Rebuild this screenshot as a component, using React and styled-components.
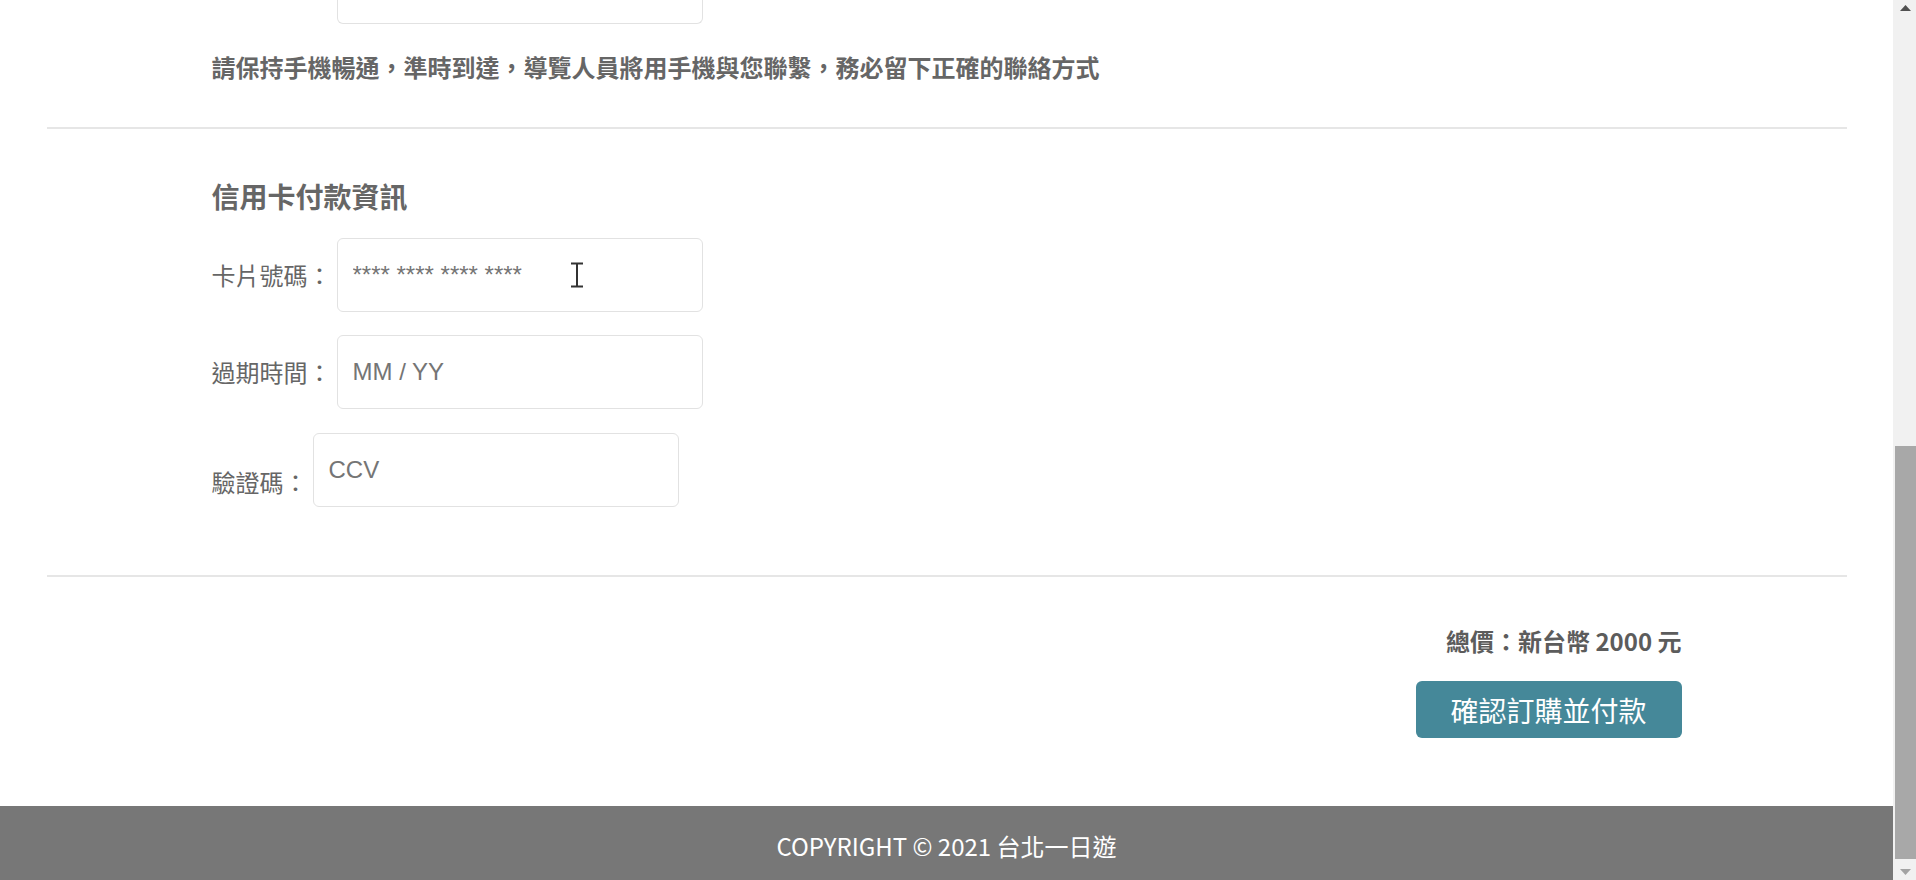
import React from "react";
import styled, { createGlobalStyle } from "styled-components";

const Global = createGlobalStyle`
  html, body { margin: 0; padding: 0; overflow: hidden; background: #fff; }
  body { font-family: "Noto Sans CJK TC", "Noto Sans", sans-serif; }
  * { box-sizing: border-box; }
`;

const Viewport = styled.div`
  display: flex;
  width: 1916px;
  height: 880px;
  overflow: hidden;
`;

const Page = styled.div`
  flex: 1;
  display: flex;
  flex-direction: column;
  min-width: 0;
`;

const Container = styled.div`
  width: 1470px;
  margin: 0 auto;
  display: flex;
  flex-direction: column;
  align-items: ${(p) => (p.$end ? "flex-end" : "flex-start")};
`;

const StubInput = styled.div`
  margin-left: 125px;
  width: 366px;
  height: 24px;
  border: 1px solid #e2e2e2;
  border-top: none;
  border-radius: 0 0 6px 6px;
`;

const Notice = styled.p`
  margin: 25px 0 0;
  font-size: 24px;
  line-height: 36px;
  font-weight: 700;
  color: #666;
`;

const Divider = styled.hr`
  width: 1800px;
  height: 2px;
  margin: ${(p) => p.$top}px auto 0;
  border: none;
  background: #e6e6e6;
`;

const Heading = styled.h2`
  margin: 47px 0 0;
  font-size: 28px;
  line-height: 40px;
  font-weight: 700;
  color: #666;
`;

const Row = styled.div`
  position: relative;
  display: flex;
  align-items: ${(p) => (p.$low ? "flex-end" : "center")};
  gap: 5px;
  margin-top: ${(p) => p.$top}px;
`;

const Label = styled.label`
  font-size: 24px;
  line-height: 36px;
  color: #666;
  white-space: nowrap;
  margin-bottom: ${(p) => (p.$low ? 7 : 0)}px;
`;

const Input = styled.input`
  width: 366px;
  height: 74px;
  padding: 0 15px;
  border: 1px solid #e2e2e2;
  border-radius: 6px;
  font-family: "Liberation Sans", Arial, sans-serif;
  font-size: 24px;
  color: #333;
  outline: none;
  background: #fff;
  &::placeholder { color: #757575; }
`;

const Cursor = styled.svg`
  position: absolute;
  left: 358px;
  top: 24px;
  width: 14px;
  height: 26px;
`;

const Total = styled.p`
  margin: 46px 0 0;
  font-size: 24px;
  line-height: 36px;
  font-weight: 700;
  color: #5c5c5c;
`;

const PayButton = styled.button`
  margin-top: 22px;
  width: 266px;
  height: 57px;
  border: none;
  border-radius: 6px;
  background: #458899;
  color: #fff;
  font-family: "Noto Sans CJK TC", "Noto Sans", sans-serif;
  font-size: 28px;
  line-height: 40px;
  padding: 0;
  cursor: pointer;
`;

const Footer = styled.footer`
  margin-top: 68px;
  flex: 1;
  background: #777777;
  color: #fff;
  text-align: center;
  font-size: 24px;
  line-height: 36px;
  padding-top: 22px;
`;

const ScrollTrack = styled.div`
  width: 23px;
  background: #f1f1f1;
  display: flex;
  flex-direction: column;
`;

const Arrow = styled.div`
  height: 17px;
  display: flex;
  justify-content: center;
  align-items: ${(p) => (p.$down ? "center" : "flex-start")};
  padding-top: ${(p) => (p.$down ? 0 : 5)}px;
  padding-left: 2px;
`;

const Spacer = styled.div`
  flex: 1;
`;

const Thumb = styled.div`
  margin-left: 2px;
  width: 21px;
  height: 413px;
  margin-bottom: 4px;
  background: #a8a8a8;
`;

export default function App() {
  return (
    <>
      <Global />
      <Viewport>
        <Page>
          <Container>
            <StubInput />
            <Notice>
              請保持手機暢通，準時到達，導覽人員將用手機與您聯繫，務必留下正確的聯絡方式
            </Notice>
          </Container>
          <Divider $top={42} />
          <Container>
            <Heading>信用卡付款資訊</Heading>
            <Row $top={22}>
              <Label>卡片號碼：</Label>
              <Input placeholder="**** **** **** ****" />
              <Cursor viewBox="0 0 14 26">
                <path
                  d="M1 1.5h12M1 24.5h12M7 1.5v23"
                  stroke="#333"
                  strokeWidth="2"
                  fill="none"
                />
              </Cursor>
            </Row>
            <Row $top={23}>
              <Label>過期時間：</Label>
              <Input placeholder="MM / YY" />
            </Row>
            <Row $top={24} $low>
              <Label $low>驗證碼：</Label>
              <Input placeholder="CCV" />
            </Row>
          </Container>
          <Divider $top={68} />
          <Container $end>
            <Total>總價：新台幣 2000 元</Total>
            <PayButton>確認訂購並付款</PayButton>
          </Container>
          <Footer>COPYRIGHT © 2021 台北一日遊</Footer>
        </Page>
        <ScrollTrack>
          <Arrow>
            <svg width="11" height="6" viewBox="0 0 11 6">
              <path d="M0 6L5.5 0L11 6Z" fill="#505050" />
            </svg>
          </Arrow>
          <Spacer />
          <Thumb />
          <Arrow $down>
            <svg width="11" height="6" viewBox="0 0 11 6">
              <path d="M0 0L5.5 6L11 0Z" fill="#a3a3a3" />
            </svg>
          </Arrow>
        </ScrollTrack>
      </Viewport>
    </>
  );
}
